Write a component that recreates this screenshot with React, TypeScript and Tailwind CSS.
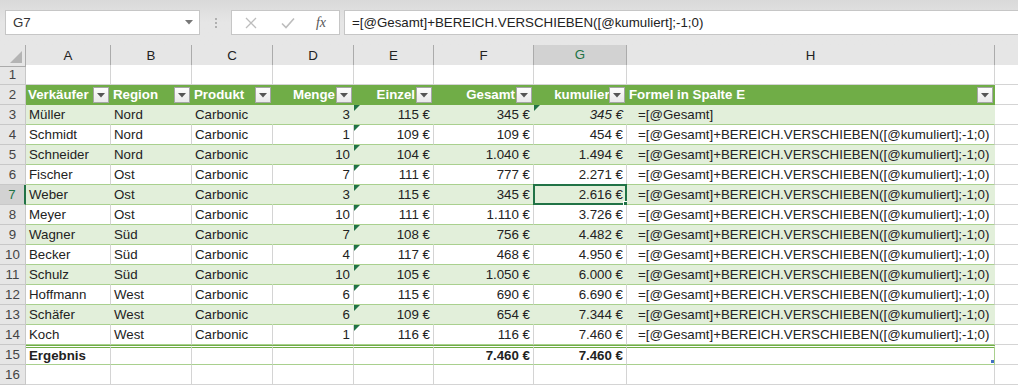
import React from "react";

const GRID = "grid grid-cols-[26px_85px_81px_81px_81px_80px_100px_93px_368px_1fr]";
const FORMULA = "=[@Gesamt]+BEREICH.VERSCHIEBEN([@kumuliert];-1;0)";

type Row = [string, string, string, string, string, string, string];

const rows: Row[] = [
  ["Müller", "Nord", "Carbonic", "3", "115 €", "345 €", "345 €"],
  ["Schmidt", "Nord", "Carbonic", "1", "109 €", "109 €", "454 €"],
  ["Schneider", "Nord", "Carbonic", "10", "104 €", "1.040 €", "1.494 €"],
  ["Fischer", "Ost", "Carbonic", "7", "111 €", "777 €", "2.271 €"],
  ["Weber", "Ost", "Carbonic", "3", "115 €", "345 €", "2.616 €"],
  ["Meyer", "Ost", "Carbonic", "10", "111 €", "1.110 €", "3.726 €"],
  ["Wagner", "Süd", "Carbonic", "7", "108 €", "756 €", "4.482 €"],
  ["Becker", "Süd", "Carbonic", "4", "117 €", "468 €", "4.950 €"],
  ["Schulz", "Süd", "Carbonic", "10", "105 €", "1.050 €", "6.000 €"],
  ["Hoffmann", "West", "Carbonic", "6", "115 €", "690 €", "6.690 €"],
  ["Schäfer", "West", "Carbonic", "6", "109 €", "654 €", "7.344 €"],
  ["Koch", "West", "Carbonic", "1", "116 €", "116 €", "7.460 €"],
];

function Triangle() {
  return (
    <svg className="absolute left-0 top-0" width="6" height="6" viewBox="0 0 6 6">
      <polygon points="0,0 6,0 0,6" fill="#217346" />
    </svg>
  );
}

function FilterButton() {
  return (
    <div className="w-[16px] h-[16px] shrink-0 border border-[#a6a6a6] bg-gradient-to-b from-[#fdfdfd] to-[#e9e9e9] flex items-center justify-center">
      <svg width="8" height="5" viewBox="0 0 8 5">
        <polygon points="0,0 8,0 4,4.5" fill="#555" />
      </svg>
    </div>
  );
}

function RowHeader({ n, active }: { n: number; active?: boolean }) {
  return (
    <div
      className={
        active
          ? "h-[20px] border-b border-[#c8c8c8] border-r-2 border-r-[#217346] bg-[#d2d2d2] text-[#217346] flex items-center justify-center"
          : "h-[20px] border-b border-r border-[#c8c8c8] bg-[#e6e6e6] text-[#444] flex items-center justify-center"
      }
    >
      {n}
    </div>
  );
}

function HeaderCell({ label, right, clip }: { label: string; right?: boolean; clip?: boolean }) {
  return (
    <div className="h-[20px] bg-[#70ad47] border-r border-[#70ad47] flex items-center pl-[2px] pr-[1px] text-white font-bold overflow-hidden">
      <span className={(right ? "flex-1 text-right pr-[1px] " : "flex-1 ") + (clip ? "whitespace-nowrap overflow-visible -mr-[6px]" : "whitespace-nowrap")}>
        {label}
      </span>
      <div className="relative z-10">
        <FilterButton />
      </div>
    </div>
  );
}

export default function App() {
  return (
    <div className="w-[1018px] h-[385px] overflow-hidden bg-[#e6e6e6] font-['Liberation_Sans',Arial,sans-serif] text-[13.3px] text-[#222] select-none">
      {/* formula bar */}
      <div className="h-[45px] bg-gradient-to-b from-[#d9d9d9] via-[#e6e6e6] to-[#e6e6e6] pt-[10px] flex items-start">
        <div className="ml-[5px] w-[195px] h-[25px] bg-white border border-[#c6c6c6] flex items-center pl-[7px] pr-[6px] text-[#333]">
          <span className="flex-1">G7</span>
          <svg width="8" height="5" viewBox="0 0 8 5">
            <polygon points="0,0 8,0 4,4.5" fill="#777" />
          </svg>
        </div>
        <div className="w-[31px] h-[25px] flex flex-col items-center justify-center gap-[2px]">
          <div className="w-[2px] h-[2px] bg-[#b0b0b0]" />
          <div className="w-[2px] h-[2px] bg-[#b0b0b0]" />
          <div className="w-[2px] h-[2px] bg-[#b0b0b0]" />
        </div>
        <div className="w-[109px] h-[25px] bg-white border border-[#c6c6c6] flex items-center">
          <div className="w-[38px] flex justify-center">
            <svg width="12" height="12" viewBox="0 0 12 12">
              <path d="M1 1 L11 11 M11 1 L1 11" stroke="#bdbdbd" strokeWidth="1.3" />
            </svg>
          </div>
          <div className="w-[36px] flex justify-center">
            <svg width="14" height="12" viewBox="0 0 14 12">
              <path d="M1 6.5 L5 10.5 L13 1.5" stroke="#bdbdbd" strokeWidth="1.6" fill="none" />
            </svg>
          </div>
          <div className="w-[30px] flex justify-center font-['Liberation_Serif',serif] italic text-[14px] text-[#555]">
            fx
          </div>
        </div>
        <div className="ml-[4px] flex-1 h-[25px] bg-white border border-[#c6c6c6] border-r-0 flex items-center pl-[7px] text-[#222]">
          {FORMULA}
        </div>
      </div>

      {/* column headers */}
      <div className={GRID + " h-[20px] bg-[#e6e6e6] text-[#222]"}>
        <div className="border-r border-b border-[#ababab] relative">
          <svg className="absolute right-[3px] bottom-[3px]" width="12" height="12" viewBox="0 0 12 12">
            <polygon points="12,0 12,12 0,12" fill="#b4b4b4" />
          </svg>
        </div>
        {["A", "B", "C", "D", "E", "F"].map((c) => (
          <div key={c} className="border-r border-b border-[#ababab] flex items-center justify-center">
            {c}
          </div>
        ))}
        <div className="border-r border-[#ababab] border-b-2 border-b-[#217346] bg-[#d2d2d2] text-[#217346] flex items-center justify-center">
          G
        </div>
        <div className="border-r border-b border-[#ababab] flex items-center justify-center">H</div>
        <div className="border-b border-[#ababab]" />
      </div>

      {/* row 1 */}
      <div className={GRID + " h-[20px]"}>
        <RowHeader n={1} />
        {Array.from({ length: 8 }).map((_, i) => (
          <div key={i} className="bg-white border-r border-b border-[#d4d4d4]" />
        ))}
        <div className="bg-white border-b border-[#d4d4d4]" />
      </div>

      {/* row 2: table header */}
      <div className={GRID + " h-[20px]"}>
        <RowHeader n={2} />
        <HeaderCell label="Verkäufer" />
        <HeaderCell label="Region" />
        <HeaderCell label="Produkt" />
        <HeaderCell label="Menge" right />
        <HeaderCell label="Einzel" right />
        <HeaderCell label="Gesamt" right />
        <HeaderCell label="kumuliert" right clip />
        <HeaderCell label="Formel in Spalte E" />
        <div className="bg-white border-b border-[#d4d4d4]" />
      </div>

      {/* data rows */}
      {rows.map((r, i) => {
        const n = i + 3;
        const band = i % 2 === 0;
        const sel = n === 7;
        const cell = band
          ? "h-[20px] bg-[#e2efda] border-b border-b-[#a9d08e] border-r border-r-[#e2efda] relative whitespace-nowrap flex items-center px-[3px]"
          : "h-[20px] bg-white border-b border-b-[#a9d08e] border-r border-r-[#d4d4d4] relative whitespace-nowrap flex items-center px-[3px]";
        return (
          <div key={n} className={GRID + " h-[20px] text-[#222]"}>
            <RowHeader n={n} active={sel} />
            <div className={cell}>{r[0]}</div>
            <div className={cell}>{r[1]}</div>
            <div className={cell}>{r[2]}</div>
            <div className={cell + " justify-end"}>{r[3]}</div>
            <div className={cell + " justify-end"}>
              <Triangle />
              {r[4]}
            </div>
            <div className={cell + " justify-end"}>{r[5]}</div>
            <div className={cell + " justify-end" + (n === 3 ? " italic" : "")}>
              {n === 3 && <Triangle />}
              {r[6]}
              {sel && (
                <>
                  <div className="absolute -left-[1px] -top-[1px] -right-[1px] -bottom-[1px] border-2 border-[#217346] pointer-events-none" />
                  <div className="absolute -right-[3px] -bottom-[3px] w-[6px] h-[6px] bg-[#217346] border border-white" />
                </>
              )}
            </div>
            <div className={cell + " border-r-[#a9d08e] pl-[11px]"}>{n === 3 ? "=[@Gesamt]" : FORMULA}</div>
            <div className="h-[20px] bg-white border-b border-[#d4d4d4]" />
          </div>
        );
      })}

      {/* row 15: totals */}
      <div className={GRID + " h-[20px] text-[#222]"}>
        <RowHeader n={15} />
        {[
          { t: "Ergebnis", r: false },
          { t: "", r: false },
          { t: "", r: false },
          { t: "", r: false },
          { t: "", r: false },
          { t: "7.460 €", r: true },
          { t: "7.460 €", r: true },
        ].map((c, i) => (
          <div
            key={i}
            className={
              "h-[20px] bg-white border-t-[3px] border-double border-t-[#70ad47] border-b border-b-[#a9d08e] border-r border-r-[#d4d4d4] flex items-center px-[3px] font-bold" +
              (c.r ? " justify-end" : "")
            }
          >
            {c.t}
          </div>
        ))}
        <div className="h-[20px] bg-white border-t-[3px] border-double border-t-[#70ad47] border-b border-b-[#a9d08e] border-r border-r-[#a9d08e] relative">
          <div className="absolute right-[0px] bottom-[1px] w-[3px] h-[3px] bg-[#4472c4]" />
        </div>
        <div className="h-[20px] bg-white border-b border-[#d4d4d4]" />
      </div>

      {/* row 16 */}
      <div className={GRID + " h-[20px]"}>
        <RowHeader n={16} />
        {Array.from({ length: 8 }).map((_, i) => (
          <div key={i} className="bg-white border-r border-b border-[#d4d4d4]" />
        ))}
        <div className="bg-white border-b border-[#d4d4d4]" />
      </div>
    </div>
  );
}
